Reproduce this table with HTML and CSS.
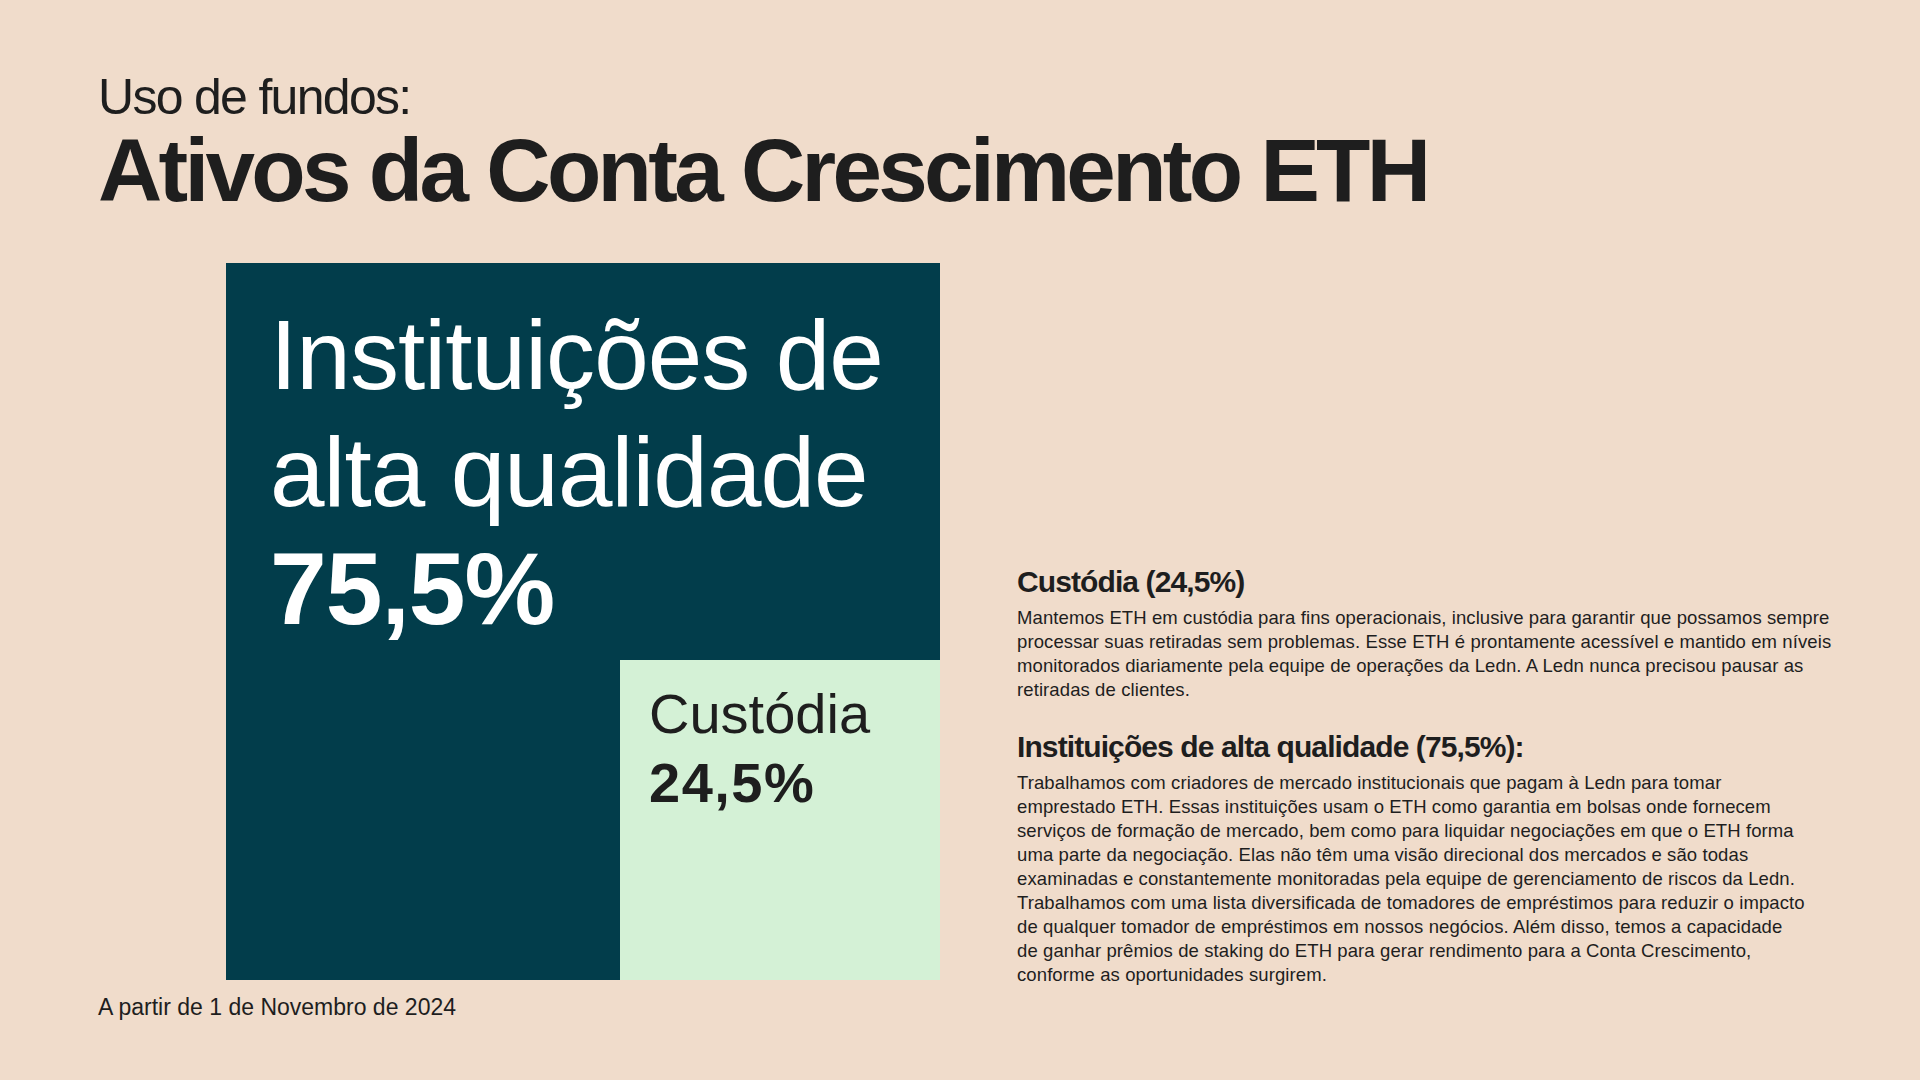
FILE: index.html
```html
<!DOCTYPE html>
<html lang="pt">
<head>
<meta charset="utf-8">
<title>Ativos da Conta Crescimento ETH</title>
<link rel="stylesheet" href="styles.css">
</head>
<body>
<main class="page">
  <header class="header">
    <p class="kicker">Uso de fundos:</p>
    <h1 class="title">Ativos da Conta Crescimento ETH</h1>
  </header>
  <section class="content">
    <div class="chart">
      <div class="chart-main">
        <p class="main-label">Instituições de<br>alta qualidade</p>
        <p class="main-value">75,5%</p>
      </div>
      <div class="chart-sub">
        <p class="sub-label">Custódia</p>
        <p class="sub-value">24,5%</p>
      </div>
    </div>
    <div class="notes">
      <h2 class="note-title">Custódia (24,5%)</h2>
      <p class="note-text">Mantemos ETH em custódia para fins operacionais, inclusive para garantir que possamos sempre<br>processar suas retiradas sem problemas. Esse ETH é prontamente acessível e mantido em níveis<br>monitorados diariamente pela equipe de operações da Ledn. A Ledn nunca precisou pausar as<br>retiradas de clientes.</p>
      <h2 class="note-title note-title-second">Instituições de alta qualidade (75,5%):</h2>
      <p class="note-text">Trabalhamos com criadores de mercado institucionais que pagam à Ledn para tomar<br>emprestado ETH. Essas instituições usam o ETH como garantia em bolsas onde fornecem<br>serviços de formação de mercado, bem como para liquidar negociações em que o ETH forma<br>uma parte da negociação. Elas não têm uma visão direcional dos mercados e são todas<br>examinadas e constantemente monitoradas pela equipe de gerenciamento de riscos da Ledn.<br>Trabalhamos com uma lista diversificada de tomadores de empréstimos para reduzir o impacto<br>de qualquer tomador de empréstimos em nossos negócios. Além disso, temos a capacidade<br>de ganhar prêmios de staking do ETH para gerar rendimento para a Conta Crescimento,<br>conforme as oportunidades surgirem.</p>
    </div>
  </section>
  <footer class="footer">A partir de 1 de Novembro de 2024</footer>
</main>
</body>
</html>
```
FILE: styles.css
```css
* {
  box-sizing: border-box;
}

html, body {
  margin: 0;
  padding: 0;
}

body {
  width: 1920px;
  height: 1080px;
  overflow: hidden;
  background: #f0dccb;
  color: #1e1e1e;
  font-family: "Liberation Sans", Arial, sans-serif;
}

p, h1, h2 {
  margin: 0;
}

.page {
  padding: 72px 0 0 98px;
}

.header {
  display: flex;
  flex-direction: column;
  gap: 4px;
}

.kicker {
  font-size: 50px;
  line-height: 1;
  font-weight: 400;
  letter-spacing: -1.7px;
}

.title {
  font-size: 89px;
  line-height: 1;
  font-weight: 700;
  letter-spacing: -3.7px;
}

.content {
  display: flex;
  align-items: flex-start;
  margin-top: 48px;
  margin-left: 128px;
  gap: 77px;
}

.chart {
  width: 714px;
  height: 717px;
  background: #023d4b;
  display: grid;
  grid-template-columns: 394px 320px;
  grid-template-rows: 397px 320px;
}

.chart-main {
  grid-column: 1 / 3;
  grid-row: 1;
  padding: 34px 0 0 44px;
  color: #ffffff;
}

.main-label {
  font-size: 98px;
  line-height: 117px;
  font-weight: 400;
  letter-spacing: -0.9px;
}

.main-value {
  font-size: 102px;
  line-height: 117px;
  font-weight: 700;
  letter-spacing: -1px;
}

.chart-sub {
  grid-column: 2;
  grid-row: 2;
  background: #d4f1d6;
  padding: 19px 0 0 29px;
}

.sub-label {
  font-size: 56px;
  line-height: 69px;
  font-weight: 400;
  letter-spacing: 0;
}

.sub-value {
  font-size: 56px;
  line-height: 69px;
  font-weight: 700;
  letter-spacing: 1.5px;
}

.notes {
  margin-top: 304px;
  display: flex;
  flex-direction: column;
}

.note-title {
  font-size: 30px;
  line-height: 1;
  font-weight: 700;
  letter-spacing: -0.9px;
}

.note-title-second {
  margin-top: 30px;
}

.note-text {
  margin-top: 9px;
  font-size: 18.5px;
  line-height: 24px;
  letter-spacing: 0.1px;
  white-space: nowrap;
}

.footer {
  margin-top: 9px;
  font-size: 23px;
  line-height: 1;
}
```
